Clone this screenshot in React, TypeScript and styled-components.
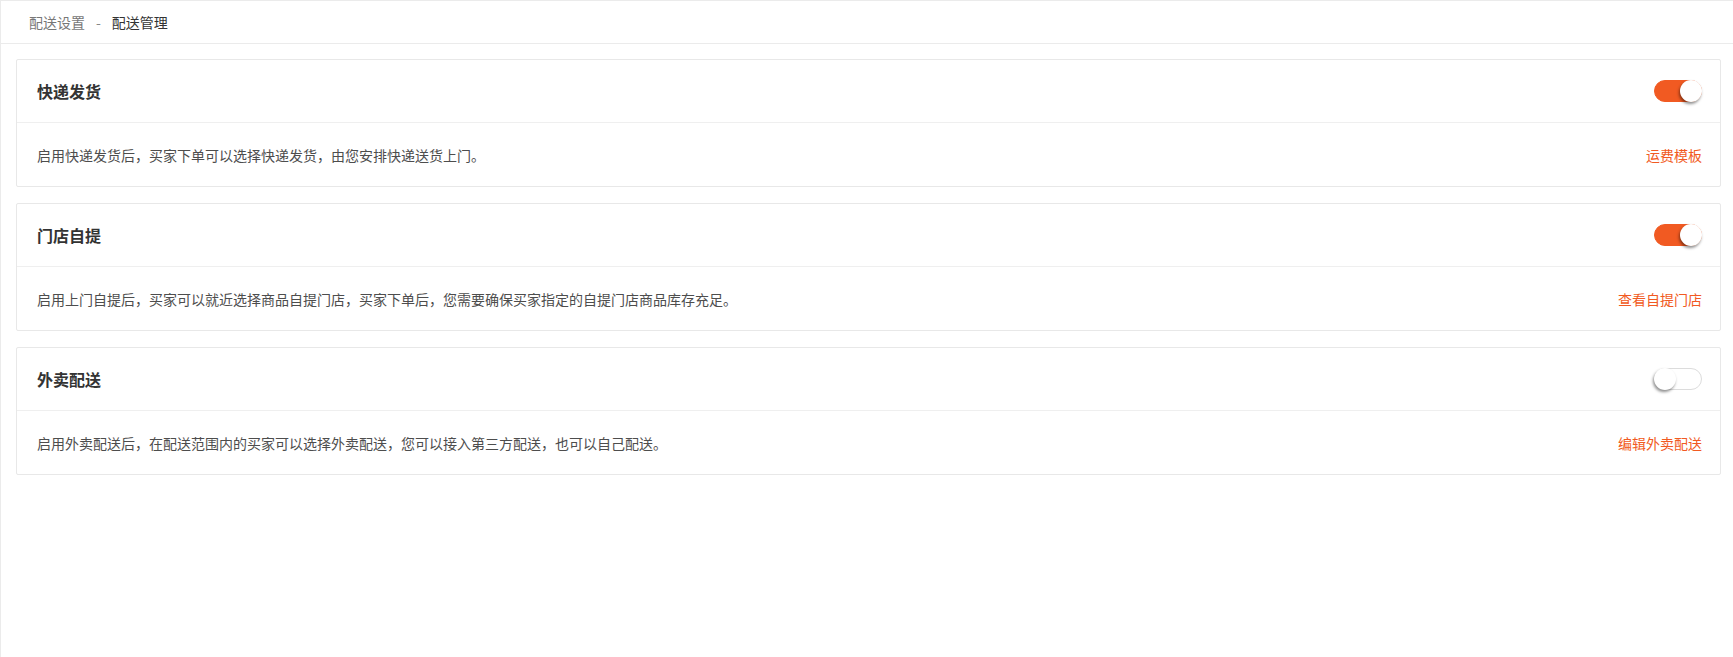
import React, { useState } from 'react';
import styled, { createGlobalStyle } from 'styled-components';

const GlobalStyle = createGlobalStyle`
  html, body {
    margin: 0;
    padding: 0;
    background: #fff;
  }
  body {
    font-family: "Noto Sans CJK SC", "Noto Sans", "Liberation Sans", sans-serif;
    color: #333;
  }
`;

const brand = '#f15a22';

const Page = styled.div`
  min-height: 657px;
  box-sizing: border-box;
  border-top: 1px solid #ebebeb;
  border-left: 1px solid #ebebeb;
  background: #fff;
`;

const Header = styled.div`
  height: 42px;
  display: flex;
  align-items: center;
  padding-left: 28px;
  border-bottom: 1px solid #ebebeb;
  font-size: 14px;
  line-height: 20px;
`;

const Crumb = styled.span<{ $current?: boolean }>`
  color: ${(p) => (p.$current ? '#333' : '#777')};
`;

const Separator = styled.span`
  color: #888;
  margin: 0 11px;
`;

const Content = styled.div`
  display: flex;
  flex-direction: column;
  gap: 16px;
  padding: 15px 12px 0 15px;
`;

const Card = styled.section`
  border: 1px solid #e8e8e8;
  border-radius: 2px;
  background: #fff;
`;

const CardHeader = styled.div`
  height: 62px;
  display: flex;
  align-items: center;
  justify-content: space-between;
  padding: 0 18px 0 20px;
  border-bottom: 1px solid #efefef;
`;

const CardTitle = styled.h3`
  margin: 0;
  font-size: 16px;
  font-weight: 700;
  color: #333;
`;

const CardBody = styled.div`
  height: 63px;
  display: flex;
  align-items: center;
  justify-content: space-between;
  padding: 0 18px 0 20px;
  font-size: 14px;
`;

const Desc = styled.p`
  margin: 0;
  color: #4d4d4d;
`;

const ActionLink = styled.a`
  color: ${brand};
  text-decoration: none;
  cursor: pointer;
`;

const Track = styled.button<{ $on: boolean }>`
  position: relative;
  width: 48px;
  height: 22px;
  padding: 0;
  border-radius: 11px;
  cursor: pointer;
  box-sizing: border-box;
  border: 1px solid ${(p) => (p.$on ? brand : '#dcdcdc')};
  background: ${(p) => (p.$on ? brand : '#fff')};
  transition: background 0.2s;
`;

const Knob = styled.span<{ $on: boolean }>`
  position: absolute;
  top: -1px;
  left: ${(p) => (p.$on ? '25px' : '-1px')};
  width: 22px;
  height: 22px;
  border-radius: 50%;
  background: #fff;
  box-shadow: -1px 2px 3px rgba(0, 0, 0, 0.45);
  transition: left 0.2s;
`;

interface Switch {
  on: boolean;
  onToggle: () => void;
}

const Toggle: React.FC<Switch> = ({ on, onToggle }) => (
  <Track $on={on} onClick={onToggle} aria-pressed={on}>
    <Knob $on={on} />
  </Track>
);

const methods = [
  {
    key: 'express',
    title: '快递发货',
    desc: '启用快递发货后，买家下单可以选择快递发货，由您安排快递送货上门。',
    link: '运费模板',
    on: true,
  },
  {
    key: 'pickup',
    title: '门店自提',
    desc: '启用上门自提后，买家可以就近选择商品自提门店，买家下单后，您需要确保买家指定的自提门店商品库存充足。',
    link: '查看自提门店',
    on: true,
  },
  {
    key: 'takeout',
    title: '外卖配送',
    desc: '启用外卖配送后，在配送范围内的买家可以选择外卖配送，您可以接入第三方配送，也可以自己配送。',
    link: '编辑外卖配送',
    on: false,
  },
];

export default function App() {
  const [state, setState] = useState<Record<string, boolean>>(
    Object.fromEntries(methods.map((m) => [m.key, m.on]))
  );

  return (
    <Page>
      <GlobalStyle />
      <Header>
        <Crumb>配送设置</Crumb>
        <Separator>-</Separator>
        <Crumb $current>配送管理</Crumb>
      </Header>
      <Content>
        {methods.map((m) => (
          <Card key={m.key}>
            <CardHeader>
              <CardTitle>{m.title}</CardTitle>
              <Toggle
                on={state[m.key]}
                onToggle={() => setState((s) => ({ ...s, [m.key]: !s[m.key] }))}
              />
            </CardHeader>
            <CardBody>
              <Desc>{m.desc}</Desc>
              <ActionLink>{m.link}</ActionLink>
            </CardBody>
          </Card>
        ))}
      </Content>
    </Page>
  );
}
